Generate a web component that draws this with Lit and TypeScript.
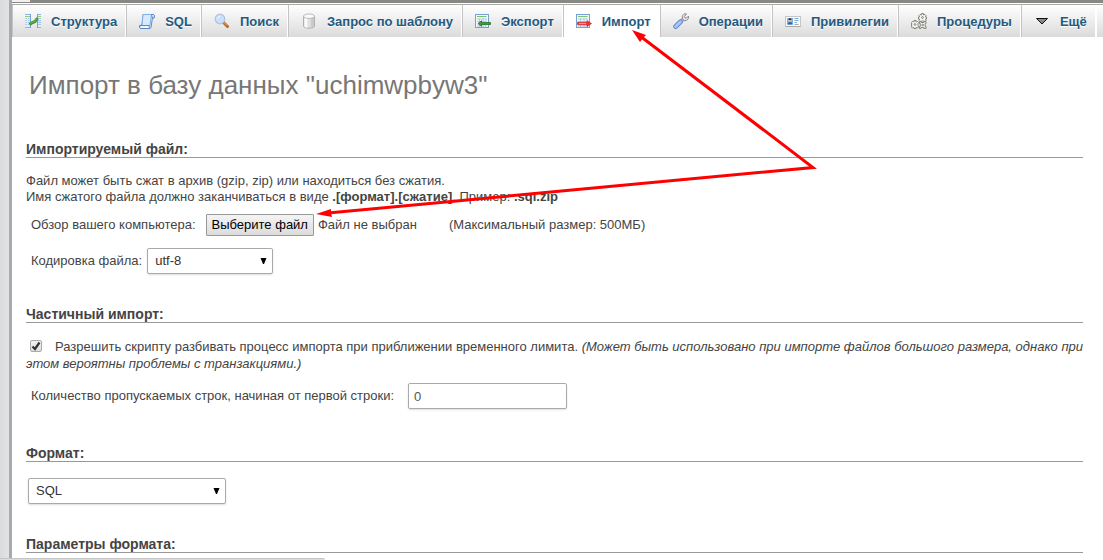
import { LitElement, html, css, svg, TemplateResult } from "lit";
import { customElement, property, query, state } from "lit/decorators.js";
import { classMap } from "lit/directives/class-map.js";

const icons: Record<string, TemplateResult> = {
  structure: svg`
    <rect x="0" y="5" width="4" height="9" fill="#e4eef9"/><path d="M0 1.500h5M0 14.500h5" stroke="#8fb4de"/><path d="M0 3.500h5" stroke="#8ccb7c"/>
    <path d="M.5 5.500h4M.5 7.500h4M.5 9.500h4M.5 11.500h4" stroke="#a9c5e6" stroke-dasharray="1.500 1"/>
    <path d="M5.500 1v14" stroke="#6fa3da"/>
    <rect x="12" y="5" width="4" height="9" fill="#e4eef9"/><path d="M12 1.500h4M12 14.500h4" stroke="#8fb4de"/><path d="M12 3.500h4" stroke="#8ccb7c"/>
    <path d="M12.500 5.500h3.500M12.500 7.500h3.500M12.500 9.500h3.500M12.500 11.500h3.500" stroke="#a9c5e6"/><path d="M12.500 1v14" stroke="#6fa3da"/>
    <path d="M4.500 11.500l2-1.500 3.500-1.500 2.500-3.500" fill="none" stroke="#3a9434" stroke-width="3"/><path d="M5.500 10.500l1.500-1 2.500-1 2-3" fill="none" stroke="#7cc568" stroke-width=".8"/>`,
  sql: svg`
    <path d="M4 1.500h10.500q1.500 1 .5 3.500l-1.500-.3L12 14.500q-.5 1.300-2 1H1.500q-1.500-.8-.8-3L3 12z" fill="#d5e8fd" stroke="#5b8fd0"/>
    <path d="M4 1.500h8.500l-1.500 11H3z" fill="#d8eafe" stroke="#7fb0ea"/><path d="M12.500 1.500l1 3.200 1.500.3q1-2.500-.5-3.500z" fill="#fff" stroke="#4d79b8" stroke-width=".8"/>
    <path d="M1 12.500h9l.5 3h-9q-1.200-1-.5-3z" fill="#f5faff" stroke="#4f80c2" stroke-width=".9"/>`,
  search: svg`
    <path d="M9 9l4.500 4.500" stroke="#b36b26" stroke-width="3" stroke-linecap="round"/><path d="M10 9.500l3 3" stroke="#f0b268" stroke-width="1"/>
    <circle cx="6" cy="6" r="4.800" fill="#c9e0fb" stroke="#b3bfd5" stroke-width="1.200"/><path d="M3.500 5.500q.5-2 2.500-2.200" fill="none" stroke="#fff"/>`,
  db: svg`
    <path d="M2.500 3v10q0 2.200 5.500 2.200T13.500 13V3z" fill="#dedede" stroke="#b1b1b1"/><path d="M3.500 5v9q2 .7 3 .7V5z" fill="#fafafa"/><path d="M10 5h3v8.500l-3 1z" fill="#c9c9c9"/>
    <ellipse cx="8" cy="3.200" rx="5.500" ry="2.200" fill="#fbfbfb" stroke="#bdbdbd"/>`,
  export: svg`
    <rect x=".5" y="1.500" width="13" height="13" fill="#f3f8fe" stroke="#74a0d4"/><path d="M2 3.500h9.500" stroke="#7cc36a"/>
    <path d="M2 6h9M2 8.500h9M2 11h9M2 13h9M4.500 5v9M8 5v9M11 5v9" stroke="#a9c8ea" stroke-width=".9"/>
    <path d="M3 10.500l3.500-2.800v1.800h9v2h-9v1.800z" fill="#3f9a37" stroke="#1b6a1a" stroke-width=".7"/>`,
  import: svg`
    <rect x=".5" y="1.500" width="13" height="13" fill="#f3f8fe" stroke="#74a0d4"/><path d="M2 3.500h9.500" stroke="#7cc36a"/>
    <path d="M2 6h9M2 8.500h9M2 13h9M4.500 5v9M8 5v9M11 5v9" stroke="#a9c8ea" stroke-width=".9"/>
    <path d="M1.500 9.300h9.500v-1.600l4.500 2.900-4.500 2.900v-1.700H1.500z" fill="#ef3434" stroke="#d01515" stroke-width=".6"/><path d="M3 10.500h7" stroke="#ffb0b0" stroke-width=".8"/>`,
  tool: svg`
    <path d="M8 8.500l3-3" stroke="#888" stroke-width="3.400"/><path d="M8.300 8.200l3-3" stroke="#e4e4e4" stroke-width="1.800"/>
    <path d="M9.500 5.500Q8.500 2 11.800.7l1.700.2-2 2.400.5 1.400 1.500.3 2-2q.8 3-2 4.500-2 .5-3.300-.5z" fill="#e2e2e2" stroke="#858585" stroke-width=".9"/>
    <path d="M2.700 13.500l4.800-4.700" stroke="#5f86cc" stroke-width="4.800" stroke-linecap="round"/><path d="M2.700 13.500l4.800-4.700" stroke="#a9c6f3" stroke-width="3" stroke-linecap="round"/>`,
  rights: svg`
    <rect x=".5" y="3.500" width="15" height="10" fill="#fafafa" stroke="#c6c6c6"/><path d="M.5 13.500h15" stroke="#aaa"/>
    <rect x="2" y="5" width="6" height="6.500" fill="#7db4ea"/><circle cx="5" cy="7.300" r="1.500" fill="#e9b88c"/><path d="M3.500 7q0-2 1.500-2t1.500 2z" fill="#49362a"/><path d="M2.500 11.500q0-2.500 2.500-2.500t2.500 2.500z" fill="#2b68b4"/>
    <path d="M9.500 5.500h4M9.500 7.500h4M9.500 9.500h2.500" stroke="#7aaedb"/><path d="M9.500 11.500h4" stroke="#aaa"/>`,
  routines: svg`
    <g fill="#f6f6f4" stroke="#7c7c75" stroke-width=".9">
      <path d="M10.500.5h2v1.500l1.500-.5 1 1-.5 1.500h1v2h-1l.5 1.500-1 1-1.500-.5h-2l-1.500.5-1-1 .5-1.500h-1v-2h1L8 2.500l1-1 1.500.5z"/>
      <path d="M3 7.500h2V9l1.500-.5 1 1-.5 1v2l.5 1.500-1 1L5 14.500v1H3v-1l-1.500.5-1-1L1 12.500H.5v-2H1L.5 9.500l1-1L3 9z"/>
      <path d="M8.500 8.500h1.500v1h3v-1h2v2h-.8v3h.8v2h-2v-1h-3v1H8.500v-2h.8v-3h-.8z"/>
      <circle cx="11.500" cy="4.500" r=".9"/><circle cx="4" cy="11.500" r=".9"/><circle cx="11.700" cy="12" r=".9"/>
    </g>`,
  more: svg`<path d="M2.500 5.500h11L8 11z" fill="#8a8a8a" stroke="#111"/>`,
};

@customElement("nav-tab")
class NavTab extends LitElement {
  @property() icon = "";
  @property() label = "";
  @property({ type: Boolean }) active = false;

  static styles = css`
    :host { display: block; flex: none; }
    .tab {
      display: flex; align-items: center; gap: 10px; height: 32px; padding: 0 8px 0 12px; box-sizing: border-box;
      border-left: 1px solid #c4c4c4; border-right: 1px solid #fff;
      background: linear-gradient(#fff, #dbdbdb);
      color: #235a81; font-weight: bold; line-height: 18px; text-decoration: none; text-shadow: 0 1px 0 #fff;
    }
    .label { padding-top: 2px; }
    .active { background: #fff; }
    svg { width: 16px; height: 16px; flex: none; }
  `;

  render() {
    return html`<a href="#" class=${classMap({ tab: true, active: this.active })}>
      <svg viewBox="0 0 16 16" aria-hidden="true">${icons[this.icon]}</svg><span class="label">${this.label}</span>
    </a>`;
  }
}

@customElement("app-root")
class AppRoot extends LitElement {
  @state() private fileName = "Файл не выбран";
  @query(".picker") private picker!: HTMLInputElement;

  private tabs = [
    ["structure", "Структура"], ["sql", "SQL"], ["search", "Поиск"], ["db", "Запрос по шаблону"],
    ["export", "Экспорт"], ["import", "Импорт"], ["tool", "Операции"], ["rights", "Привилегии"],
    ["routines", "Процедуры"], ["more", "Ещё"],
  ];

  static styles = css`
    :host {
      display: flex; position: relative; height: 100vh; overflow: hidden; background: #fff;
      font: 13px/16px "Liberation Sans", Arial, sans-serif; color: #444;
    }
    * { box-sizing: border-box; }
    .side { flex: none; width: 12px; border-right: 3px solid #aaa; background: linear-gradient(90deg, #d9dbdd, #e1e4e6); }
    .main { flex: 1; min-width: 0; }
    .top {
      height: 5px; border-bottom: 1px solid #aaa;
      background: linear-gradient(#f0f0f0, #f0f0f0) 0 0 / 18px 2px no-repeat, linear-gradient(#888885, #888885) 0 0 / 100% 3px no-repeat;
    }
    .tabs { display: flex; overflow: hidden; }
    .rest { flex: 1; height: 32px; border-left: 1px solid #fff; background: linear-gradient(#fff, #dbdbdb); }
    .content { padding: 32px 20px 0 14px; }
    h1 { margin: 0 0 40px; padding-left: 3px; font-size: 26px; line-height: 32px; font-weight: normal; color: #777; }
    h2 { margin: 0 0 15px; font-size: 14px; line-height: 16px; font-weight: bold; border-bottom: 1px solid #999; }
    p { margin: 0; }
    section { margin-bottom: 32px; }
    .row { display: flex; align-items: center; padding-left: 5px; }
    .file { margin-top: 9px; }
    .charset { margin-top: 12px; gap: 5px; }
    .skip { margin-top: 11px; padding-bottom: 4px; gap: 14px; }
    .browse {
      height: 22px; margin: 0 4px 0 10px; padding: 0 5px; border: 1px solid #999; border-radius: 1px;
      background: linear-gradient(#f4f4f4, #dcdcdc); font: inherit; color: #000;
    }
    .limit { margin-left: 32px; }
    .picker { display: none; }
    .select { display: grid; align-items: center; width: 126px; }
    .format { width: 198px; margin: 16px 0 0 2px; }
    .select > * { grid-area: 1 / 1; }
    .select svg { justify-self: end; width: 7px; height: 6px; margin-right: 6px; pointer-events: none; }
    select, .number {
      width: 100%; height: 26px; padding: 0 7px; border: 1px solid #aaa; border-radius: 2px;
      box-shadow: 0 1px 2px #ddd; background: #fff; font: inherit; color: #333; appearance: none;
    }
    .number { width: 159px; padding: 0 5px; color: #555; }
    .split { line-height: 17px; }
    .check {
      appearance: none; width: 12px; height: 12px; margin: 0 13px 0 4px; vertical-align: -1px;
      border: 1px solid #aaa; border-radius: 2px;
      background: linear-gradient(#f2f2f2, #dedede);
    }
    .check:checked {
      background: url("data:image/svg+xml,%3Csvg xmlns='http://www.w3.org/2000/svg' viewBox='0 0 10 10'%3E%3Cpath d='M1.500 5.500l2.500 2.500 4.500-6.500' fill='none' stroke='%23333' stroke-width='2.200'/%3E%3C/svg%3E"), linear-gradient(#f2f2f2, #dedede);
    }
    .arrows { position: absolute; left: 0; top: 0; width: 1103px; height: 560px; pointer-events: none; }
    .status { position: absolute; left: 0; bottom: 0; width: 325px; height: 2px; background: #dcdcdc; border-top: 1px solid #c4c4c4; border-top-right-radius: 2px; }
  `;

  private chosen() {
    this.fileName = this.picker.files?.[0]?.name ?? "Файл не выбран";
  }

  private caret() {
    return html`<svg viewBox="0 0 7 6" aria-hidden="true"><path d="M.5 0h6L4 6H3z" fill="#000" /></svg>`;
  }

  render() {
    return html`
      <div class="side"></div>
      <div class="main">
        <div class="top"></div>
        <nav class="tabs">
          ${this.tabs.map(([icon, label]) => html`<nav-tab .icon=${icon} .label=${label} ?active=${icon === "import"}></nav-tab>`)}
          <div class="rest"></div>
        </nav>
        <div class="content">
          <h1>Импорт в базу данных "uchimwpbyw3"</h1>
          <section>
            <h2>Импортируемый файл:</h2>
            <p>Файл может быть сжат в архив (gzip, zip) или находиться без сжатия.</p>
            <p>Имя сжатого файла должно заканчиваться в виде <b>.[формат].[сжатие]</b>. Пример: <b>.sql.zip</b></p>
            <div class="row file">
              <label for="browse">Обзор вашего компьютера:</label>
              <button id="browse" class="browse" @click=${() => this.picker.click()}>Выберите файл</button>
              <input class="picker" type="file" aria-label="Выберите файл" @change=${this.chosen} />
              <span>${this.fileName}</span>
              <span class="limit">(Максимальный размер: 500МБ)</span>
            </div>
            <div class="row charset">
              <label for="charset">Кодировка файла:</label>
              <div class="select"><select id="charset"><option>utf-8</option></select>${this.caret()}</div>
            </div>
          </section>
          <section>
            <h2>Частичный импорт:</h2>
            <p class="split"><input id="split" class="check" type="checkbox" checked /><label for="split">Разрешить скрипту разбивать процесс импорта при приближении временного лимита. <i>(Может быть использовано при импорте файлов большого размера, однако при этом вероятны проблемы с транзакциями.)</i></label></p>
            <div class="row skip">
              <label for="skip">Количество пропускаемых строк, начиная от первой строки:</label>
              <input id="skip" class="number" type="text" value="0" />
            </div>
          </section>
          <section>
            <h2 id="format-title">Формат:</h2>
            <div class="select format"><select aria-labelledby="format-title"><option>SQL</option></select>${this.caret()}</div>
          </section>
          <section><h2>Параметры формата:</h2></section>
        </div>
      </div>
      <svg class="arrows" viewBox="0 0 1103 560" aria-hidden="true">
        <path d="M640 36L813 167.500L328 213" fill="none" stroke="#f00" stroke-width="3" />
        <path d="M632 30l14 5-3 3-3 4zM316 214l15-5 0 4 1 4z" fill="#f00" />
      </svg>
      <div class="status"></div>
    `;
  }
}
